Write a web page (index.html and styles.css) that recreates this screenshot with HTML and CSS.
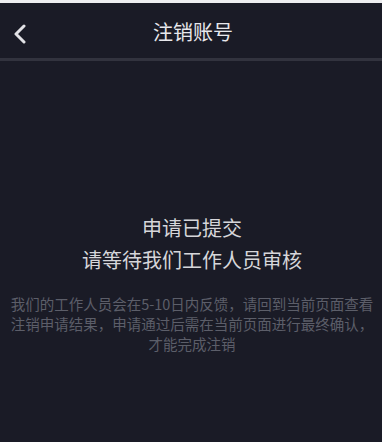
FILE: index.html
```html
<!DOCTYPE html>
<html lang="zh-CN">
<head>
<meta charset="utf-8">
<link rel="stylesheet" href="styles.css">
</head>
<body>
<div class="topstrip"></div>
<header class="nav">
  <span class="back">
    <svg width="14" height="20" viewBox="0 0 14 20"><path d="M11 2 L3 10 L11 18" fill="none" stroke="#e2e2e6" stroke-width="3" stroke-linecap="round" stroke-linejoin="round"/></svg>
  </span>
  <h1 class="title">注销账号</h1>
</header>
<div class="divider"></div>
<main class="content">
  <p class="status">申请已提交<br>请等待我们工作人员审核</p>
  <p class="desc">我们的工作人员会在5-10日内反馈，请回到当前页面查看注销申请结果，申请通过后需在当前页面进行最终确认，才能完成注销</p>
</main>
</body>
</html>
```
FILE: styles.css
```css
html, body {
  margin: 0;
  padding: 0;
  background: #1a1b26;
  font-family: "Noto Sans CJK SC", "Noto Sans", sans-serif;
}
.topstrip {
  height: 3px;
  background: #eeeef0;
}
.nav {
  height: 55px;
  display: flex;
  align-items: center;
  justify-content: center;
  position: relative;
  background: #1a1b26;
}
.back {
  position: absolute;
  left: 13px;
  top: 21px;
  display: flex;
}
.title {
  margin: 2px 0 0;
  font-size: 20px;
  font-weight: 400;
  color: #e8e8ec;
  padding-left: 4px;
}
.divider {
  height: 3px;
  background: #32333e;
}
.content {
  padding: 0 6px 0 8px;
  text-align: center;
}
.status {
  margin: 151px 0 0;
  font-size: 20px;
  font-weight: 400;
  line-height: 32px;
  color: #d6d6da;
}
.desc {
  margin: 18px 0 0;
  font-size: 14.5px;
  line-height: 20px;
  color: #5c5e69;
}
```
